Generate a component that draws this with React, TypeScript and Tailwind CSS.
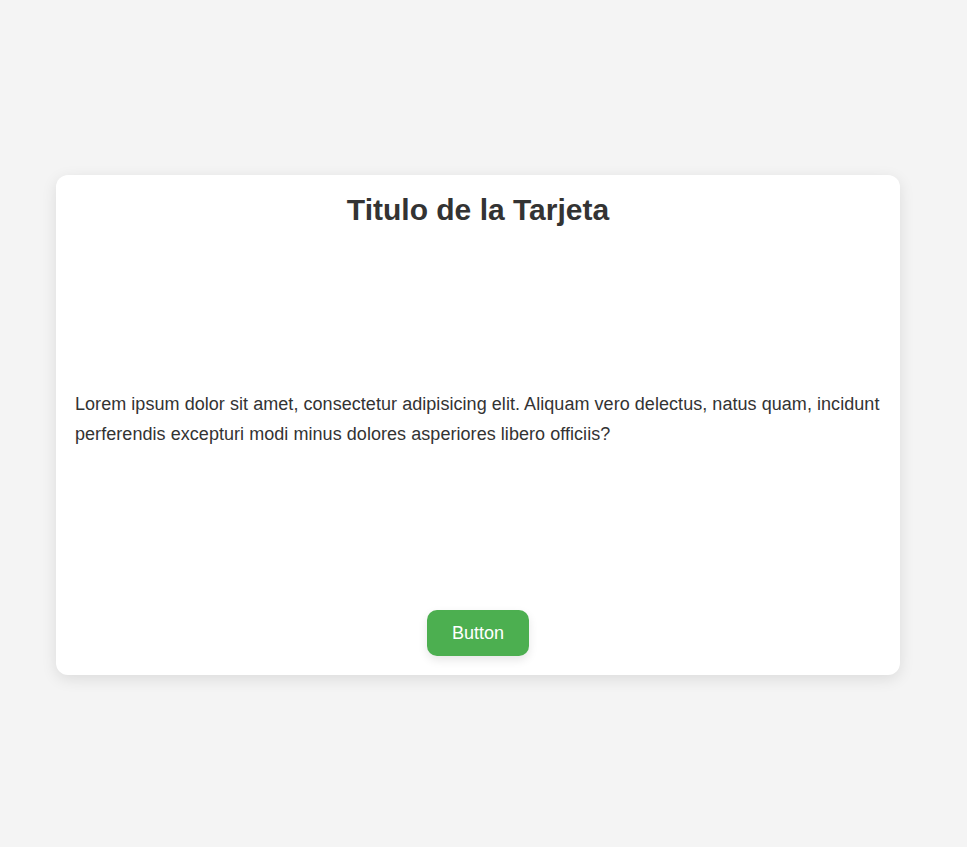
export default function App() {
  return (
    <div className="min-h-screen bg-[#f4f4f4] pt-[175px] font-['Liberation_Sans',Arial,sans-serif]">
      <div className="ml-[56px] w-[844px] h-[500px] bg-white rounded-xl shadow-[0_4px_15px_rgba(0,0,0,0.1)] px-[19px] pt-[18px] pb-[19px] flex flex-col justify-between items-center">
        <h1 className="text-[30px] font-bold text-[#333] leading-[1.15]">Titulo de la Tarjeta</h1>
        <p className="text-[18px] leading-[30px] tracking-[0.05px] text-[#333] self-stretch">
          Lorem ipsum dolor sit amet, consectetur adipisicing elit. Aliquam vero delectus, natus quam, incidunt perferendis excepturi modi minus dolores asperiores libero officiis?
        </p>
        <button className="h-[46px] px-[25px] rounded-[10px] bg-[#4caf50] text-white text-[18px] shadow-[0_4px_10px_rgba(0,0,0,0.1)]">
          Button
        </button>
      </div>
    </div>
  );
}
